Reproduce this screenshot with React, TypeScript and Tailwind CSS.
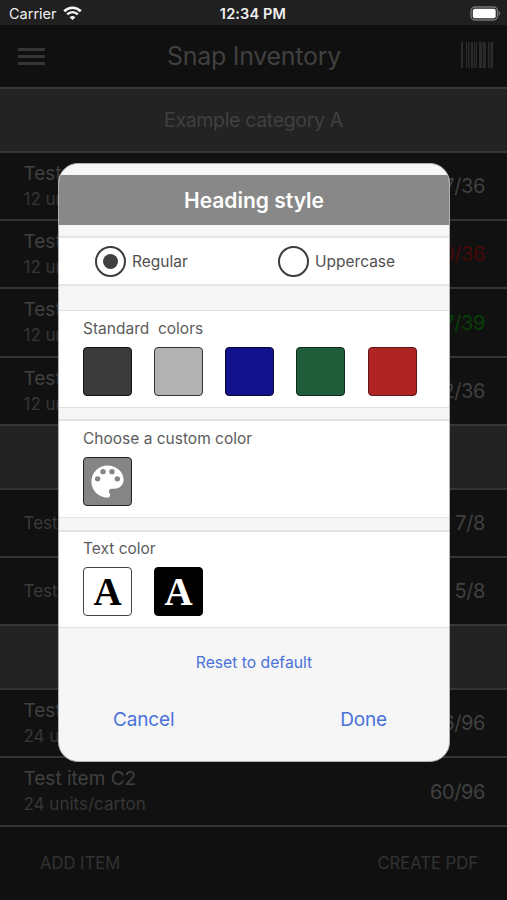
import React from "react";

type Row =
  | { kind: "heading"; height: string; title: string }
  | { kind: "item"; height: string; title: string; sub?: string; count: string; color: string };

const rows: Row[] = [
  { kind: "heading", height: "h-[64px]", title: "Example category A" },
  { kind: "item", height: "h-[68px]", title: "Test item A1", sub: "12 units/carton", count: "7/36", color: "text-[#404040]" },
  { kind: "item", height: "h-[68px]", title: "Test item A2", sub: "12 units/carton", count: "0/36", color: "text-[#480808]" },
  { kind: "item", height: "h-[69px]", title: "Test item A3", sub: "12 units/carton", count: "37/39", color: "text-[#064006]" },
  { kind: "item", height: "h-[68px]", title: "Test item A4", sub: "12 units/carton", count: "12/36", color: "text-[#404040]" },
  { kind: "heading", height: "h-[64px]", title: "" },
  { kind: "item", height: "h-[68px]", title: "Test", count: "7/8", color: "text-[#404040]" },
  { kind: "item", height: "h-[68px]", title: "Test", count: "5/8", color: "text-[#404040]" },
  { kind: "heading", height: "h-[64px]", title: "" },
  { kind: "item", height: "h-[68px]", title: "Test item C1", sub: "24 units/carton", count: "36/96", color: "text-[#404040]" },
  { kind: "item", height: "h-[69px]", title: "Test item C2", sub: "24 units/carton", count: "60/96", color: "text-[#404040]" },
];

function ListRow({ row }: { row: Row }) {
  if (row.kind === "heading") {
    return (
      <div className={`${row.height} flex shrink-0 items-center justify-center border-t-2 border-[#383838] bg-[#232323] pt-[2px]`}>
        <span className="text-[19.5px] tracking-[-0.34px] text-[#404040]">{row.title}</span>
      </div>
    );
  }
  return (
    <div className={`${row.height} flex shrink-0 justify-between border-t-2 border-[#343434] bg-[#111111] pr-[22px] pl-[23.5px]`}>
      {row.sub ? (
        <div className="flex flex-col pt-[8.5px] whitespace-nowrap">
          <span className="text-[19px] leading-6 text-[#404040]">{row.title}</span>
          <span className="pt-px text-[17px] leading-6 text-[#363636]">{row.sub}</span>
        </div>
      ) : (
        <span className="self-center pt-[2px] text-[17px] text-[#3b3b3b]">{row.title}</span>
      )}
      <span className={`self-center text-[20px] tracking-[-0.4px] ${row.color}`}>{row.count}</span>
    </div>
  );
}

function Barcode() {
  return (
    <svg width="34" height="26" viewBox="0 0 34 26" fill="#2b2b2b">
      <rect x="1" width="2" height="26" />
      <rect x="6" width="1" height="26" />
      <rect x="8" width="1.5" height="26" />
      <rect x="11" width="2" height="26" />
      <rect x="13.8" width="1.5" height="26" />
      <rect x="16" width="1" height="26" />
      <rect x="19" width="3" height="26" />
      <rect x="22.8" width="3" height="26" />
      <rect x="28" width="1.5" height="26" />
      <rect x="30.5" width="2.5" height="26" />
    </svg>
  );
}

function Wifi() {
  return (
    <svg width="19" height="15" viewBox="0 0 19 15" fill="none" stroke="#f5f5f5">
      <path d="M1.2 5.2C6 .6 13 .6 17.8 5.2" strokeWidth="2.7" />
      <path d="M4.2 8.4C7.3 5.5 11.7 5.5 14.8 8.4" strokeWidth="2.5" />
      <path d="M6.6 11.2C8.3 9.6 10.7 9.6 12.4 11.2L9.5 14.1Z" fill="#f5f5f5" stroke="none" />
    </svg>
  );
}

function Battery() {
  return (
    <svg width="31" height="16" viewBox="0 0 31 16">
      <rect x="1" y="1" width="26.5" height="13" rx="4" fill="none" stroke="#777777" strokeWidth="1.4" />
      <rect x="2.8" y="2.8" width="22.9" height="9.4" rx="2" fill="#ffffff" />
      <path d="M28.7 5.1C30.6 6 30.6 9 28.7 9.9Z" fill="#777777" />
    </svg>
  );
}

function Palette() {
  return (
    <svg width="43" height="43" viewBox="0 0 24 24" className="shrink-0">
      <path
        d="M12 3c-4.97 0-9 4.03-9 9s4.03 9 9 9c.83 0 1.5-.67 1.5-1.5 0-.39-.15-.74-.39-1.01-.23-.26-.38-.61-.38-.99 0-.83.67-1.5 1.5-1.5H16c2.76 0 5-2.24 5-5 0-4.42-4.03-8-9-8z"
        fill="#ffffff"
      />
      <g fill="#858585">
        <circle cx="6.5" cy="10.5" r="1.5" />
        <circle cx="9.5" cy="6.5" r="1.5" />
        <circle cx="14.5" cy="6.5" r="1.5" />
        <circle cx="17.5" cy="10.5" r="1.5" />
      </g>
    </svg>
  );
}

const box = "flex h-[49px] w-[49px] shrink-0 items-center justify-center rounded-[4px] border-[1.5px]";

function Radio({ label, checked }: { label: string; checked?: boolean }) {
  return (
    <div className="flex items-center">
      <span className="flex size-[31px] items-center justify-center rounded-full border-[2.5px] border-[#3c3c3c]">
        {checked && <span className="size-[15px] rounded-full bg-[#404040]" />}
      </span>
      <span className="pt-px pl-[6px] text-[15.5px] text-[#505050]">{label}</span>
    </div>
  );
}

function Modal() {
  return (
    <div className="absolute inset-0 pt-[163px] pl-[58px]">
      <div className="flex h-[599px] w-[392px] flex-col overflow-hidden rounded-[20px] border border-[#b0b0b0] bg-[#f6f6f6]">
        <div className="mt-[11px] flex h-[50px] shrink-0 items-center justify-center bg-[#888888] pt-px text-[21px] font-semibold text-white">
          Heading style
        </div>
        <div className="mt-[11px] flex h-[50px] shrink-0 border-y-2 border-[#e5e5e5] bg-white pl-[36px]">
          <div className="flex w-[183px]">
            <Radio label="Regular" checked />
          </div>
          <Radio label="Uppercase" />
        </div>
        <div className="mt-6 h-[98px] shrink-0 border-y border-[#dedede] bg-white pl-6">
          <div className="h-[36px] pt-[7px] text-[15.5px] leading-[22px] whitespace-pre text-[#5c5c5c]">Standard  colors</div>
          <div className="flex gap-[22px]">
            <div className={`${box} border-[#151515] bg-[#3a3a3a]`} />
            <div className={`${box} border-[#333333] bg-[#b2b2b2]`} />
            <div className={`${box} border-[#07072a] bg-[#12128f]`} />
            <div className={`${box} border-[#10291c] bg-[#1f5c3a]`} />
            <div className={`${box} ml-px border-[#571919] bg-[#b02424]`} />
          </div>
        </div>
        <div className="mt-[11px] h-[99px] shrink-0 border-t-2 border-b border-[#e2e2e2] bg-white pl-6">
          <div className="h-[36px] pt-[7px] text-[15.5px] leading-[22px] text-[#5c5c5c]">Choose a custom color</div>
          <div className={`${box} border-[#222222] bg-[#858585]`}>
            <Palette />
          </div>
        </div>
        <div className="mt-3 h-[98px] shrink-0 border-t-2 border-b border-[#e2e2e2] bg-white pl-6">
          <div className="h-[35px] pt-[6px] text-[15.5px] leading-[22px] text-[#5c5c5c]">Text color</div>
          <div className="flex gap-[22px] font-['Liberation_Serif',serif] text-[39px] leading-none font-bold">
            <div className={`${box} border-[#444444] bg-white text-black`}>A</div>
            <div className={`${box} border-black bg-black text-white`}>A</div>
          </div>
        </div>
        <div className="flex h-[70px] shrink-0 items-center justify-center text-[15.7px] text-[#4a72d9]">Reset to default</div>
        <div className="flex justify-between pr-[62px] pl-[54px] text-[19px] leading-[44px] tracking-[-0.15px] text-[#4a72d9]">
          <span>Cancel</span>
          <span>Done</span>
        </div>
      </div>
    </div>
  );
}

export default function App() {
  return (
    <div className="relative flex h-[900px] w-[507px] flex-col overflow-hidden bg-[#101010] font-[Inter,sans-serif]">
      <div className="flex h-[25px] shrink-0 items-center justify-between bg-[#202020] pr-[6px] pl-[9px] text-[14.5px] text-[#f0f0f0]">
        <div className="flex w-[120px] items-center gap-[6px] pt-[2px]">
          <span>Carrier</span>
          <Wifi />
        </div>
        <span className="pt-[2px] pr-px font-semibold tracking-[0.15px]">12:34 PM</span>
        <div className="flex w-[123px] justify-end pt-[2px]">
          <Battery />
        </div>
      </div>
      <div className="flex h-[62px] shrink-0 items-center justify-between bg-[#101010] pr-[13px] pl-[18px]">
        <div className="flex w-[30px] flex-col gap-1">
          <span className="h-[3px] w-[27px] bg-[#353535]" />
          <span className="h-[3px] w-[27px] bg-[#353535]" />
          <span className="h-[3px] w-[27px] bg-[#353535]" />
        </div>
        <span className="pt-[2px] text-[25px] tracking-[-0.3px] text-[#404040]">Snap Inventory</span>
        <div className="pb-[3px]">
          <Barcode />
        </div>
      </div>
      {rows.map((row, i) => (
        <ListRow key={i} row={row} />
      ))}
      <div className="flex h-[75px] shrink-0 items-center justify-between border-t-2 border-[#343434] pr-[29px] pl-10 text-[16.6px] text-[#333333]">
        <span>ADD ITEM</span>
        <span>CREATE PDF</span>
      </div>
      <Modal />
    </div>
  );
}
